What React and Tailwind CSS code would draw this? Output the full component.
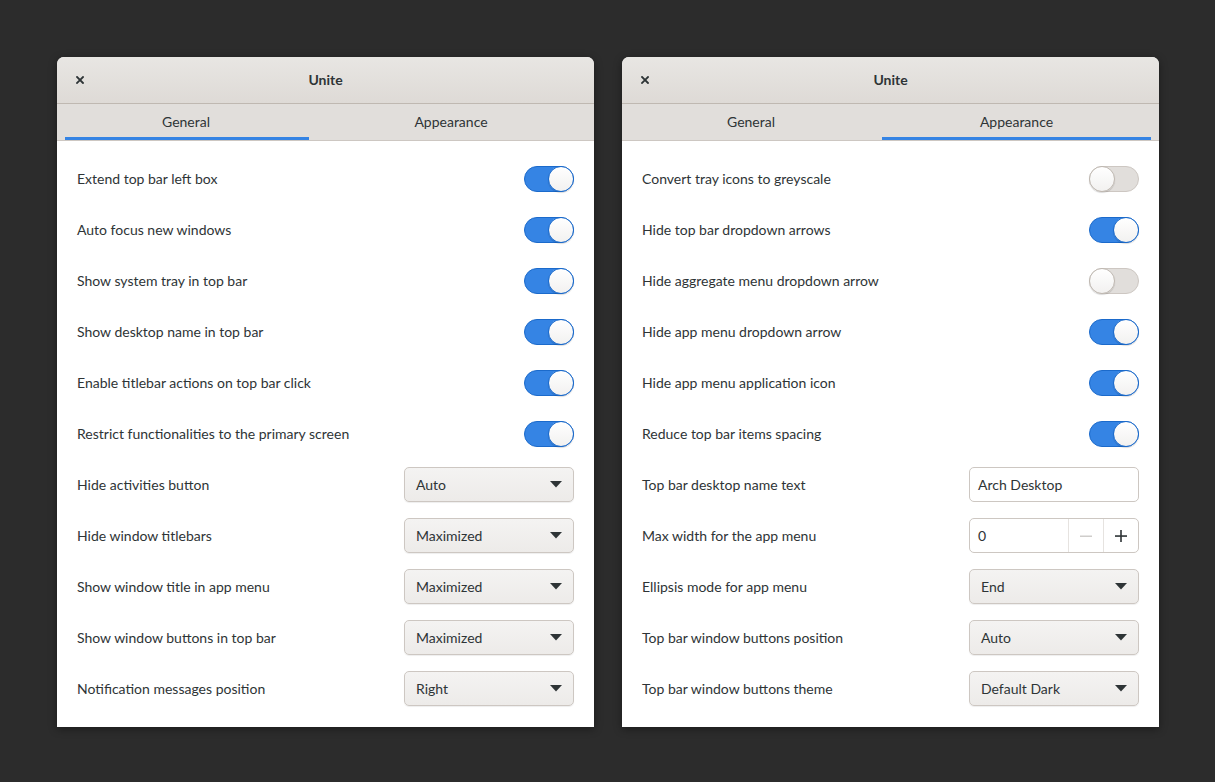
import React from "react";

const font = { fontFamily: "Lato, 'Noto Sans', sans-serif" };

function Toggle({ on }) {
  return on ? (
    <div className="relative h-[26px] w-[50px] rounded-full border border-[#1b6acb] bg-[#3584e4]">
      <div className="absolute right-[-1px] top-[-1px] h-[26px] w-[26px] rounded-full border border-[#1b6acb] bg-gradient-to-b from-white to-[#f2f1f0] shadow-[0_1px_1px_rgba(0,0,0,0.15)]" />
    </div>
  ) : (
    <div className="relative h-[26px] w-[50px] rounded-full border border-[#cdc7c2] bg-[#e1dedb]">
      <div className="absolute left-[-1px] top-[-1px] h-[26px] w-[26px] rounded-full border border-[#bfb8b1] bg-gradient-to-b from-white to-[#f2f1f0] shadow-[0_1px_1px_rgba(0,0,0,0.15)]" />
    </div>
  );
}

function Combo({ value }) {
  return (
    <div className="flex h-[35px] w-[170px] items-center justify-between rounded-[5px] border border-[#cdc7c2] bg-gradient-to-b from-[#f4f3f2] to-[#edebe9] pl-[11px] pr-[11px] text-[14px] text-[#2e3436] shadow-[0_1px_1px_rgba(0,0,0,0.07)]">
      <span>{value}</span>
      <svg width="12" height="7" viewBox="0 0 12 7">
        <path d="M0 0 L12 0 L6 6.5 Z" fill="#2e3436" />
      </svg>
    </div>
  );
}

function Entry({ value }) {
  return (
    <div className="flex h-[35px] w-[170px] items-center rounded-[5px] border border-[#cdc7c2] bg-white px-[8px] text-[14px] text-[#2e3436]">
      {value}
    </div>
  );
}

function Spin({ value }) {
  return (
    <div className="flex h-[35px] w-[170px] items-stretch rounded-[5px] border border-[#cdc7c2] bg-white text-[14px] text-[#2e3436]">
      <div className="flex flex-1 items-center px-[8px]">{value}</div>
      <div className="flex w-[35px] items-center justify-center border-l border-[#e6e3e0]">
        <svg width="12" height="12" viewBox="0 0 12 12">
          <rect x="0" y="5.5" width="12" height="1.5" fill="#cfcdcb" />
        </svg>
      </div>
      <div className="flex w-[35px] items-center justify-center border-l border-[#e6e3e0]">
        <svg width="12" height="12" viewBox="0 0 12 12">
          <rect x="0" y="5.25" width="12" height="1.6" fill="#2e3436" />
          <rect x="5.2" y="0" width="1.6" height="12" fill="#2e3436" />
        </svg>
      </div>
    </div>
  );
}

function Row({ label, children }) {
  return (
    <div className="flex h-[51px] items-center justify-between px-[20px]">
      <span className="text-[14px] text-[#2e3436]">{label}</span>
      {children}
    </div>
  );
}

function Window({ tab, tabs, rows }) {
  return (
    <div className="flex h-[670px] w-[537px] flex-col overflow-hidden rounded-t-[7px] bg-white shadow-[0_2px_8px_rgba(0,0,0,0.4)]" style={font}>
      <div className="relative flex h-[47px] items-center justify-center border-b border-[#bfb8b1] bg-gradient-to-b from-[#e8e6e3] to-[#dedad6] pb-[2px]">
        <svg className="absolute left-[19px] top-[19px]" width="8" height="8" viewBox="0 0 8 8">
          <path d="M1 1 L7 7 M7 1 L1 7" stroke="#2e3436" strokeWidth="1.8" strokeLinecap="square" />
        </svg>
        <span className="text-[14px] font-bold text-[#2e3436]">Unite</span>
      </div>
      <div className="flex h-[37px] border-b border-[#cdc7c2] bg-[#e1dedb] px-[8px]">
        {tabs.map((t) => (
          <div
            key={t.name}
            className={
              "flex shrink-0 items-center justify-center border-b-[3px] pt-[1px] text-[14px] text-[#2e3436] " +
              (t.name === tab ? "border-[#3584e4]" : "border-transparent")
            }
            style={{ width: t.w, paddingLeft: t.pl || 0, paddingRight: t.pr || 0 }}
          >
            {t.name}
          </div>
        ))}
      </div>
      <div className="flex flex-col pt-[12px]">
        {rows.map((r) => (
          <Row key={r.label} label={r.label}>
            {r.type === "toggle" && <Toggle on={r.on} />}
            {r.type === "combo" && <Combo value={r.value} />}
            {r.type === "entry" && <Entry value={r.value} />}
            {r.type === "spin" && <Spin value={r.value} />}
          </Row>
        ))}
      </div>
    </div>
  );
}

const general = [
  { label: "Extend top bar left box", type: "toggle", on: true },
  { label: "Auto focus new windows", type: "toggle", on: true },
  { label: "Show system tray in top bar", type: "toggle", on: true },
  { label: "Show desktop name in top bar", type: "toggle", on: true },
  { label: "Enable titlebar actions on top bar click", type: "toggle", on: true },
  { label: "Restrict functionalities to the primary screen", type: "toggle", on: true },
  { label: "Hide activities button", type: "combo", value: "Auto" },
  { label: "Hide window titlebars", type: "combo", value: "Maximized" },
  { label: "Show window title in app menu", type: "combo", value: "Maximized" },
  { label: "Show window buttons in top bar", type: "combo", value: "Maximized" },
  { label: "Notification messages position", type: "combo", value: "Right" },
];

const appearance = [
  { label: "Convert tray icons to greyscale", type: "toggle", on: false },
  { label: "Hide top bar dropdown arrows", type: "toggle", on: true },
  { label: "Hide aggregate menu dropdown arrow", type: "toggle", on: false },
  { label: "Hide app menu dropdown arrow", type: "toggle", on: true },
  { label: "Hide app menu application icon", type: "toggle", on: true },
  { label: "Reduce top bar items spacing", type: "toggle", on: true },
  { label: "Top bar desktop name text", type: "entry", value: "Arch Desktop" },
  { label: "Max width for the app menu", type: "spin", value: "0" },
  { label: "Ellipsis mode for app menu", type: "combo", value: "End" },
  { label: "Top bar window buttons position", type: "combo", value: "Auto" },
  { label: "Top bar window buttons theme", type: "combo", value: "Default Dark" },
];

export default function App() {
  return (
    <div className="flex h-[782px] w-[1215px] items-start gap-[28px] bg-[#2c2c2c] pl-[57px] pt-[57px]">
      <Window
        tab="General"
        tabs={[
          { name: "General", w: 244, pr: 2 },
          { name: "Appearance", w: 277, pl: 7 },
        ]}
        rows={general}
      />
      <Window
        tab="Appearance"
        tabs={[
          { name: "General", w: 252, pr: 10 },
          { name: "Appearance", w: 269 },
        ]}
        rows={appearance}
      />
    </div>
  );
}
